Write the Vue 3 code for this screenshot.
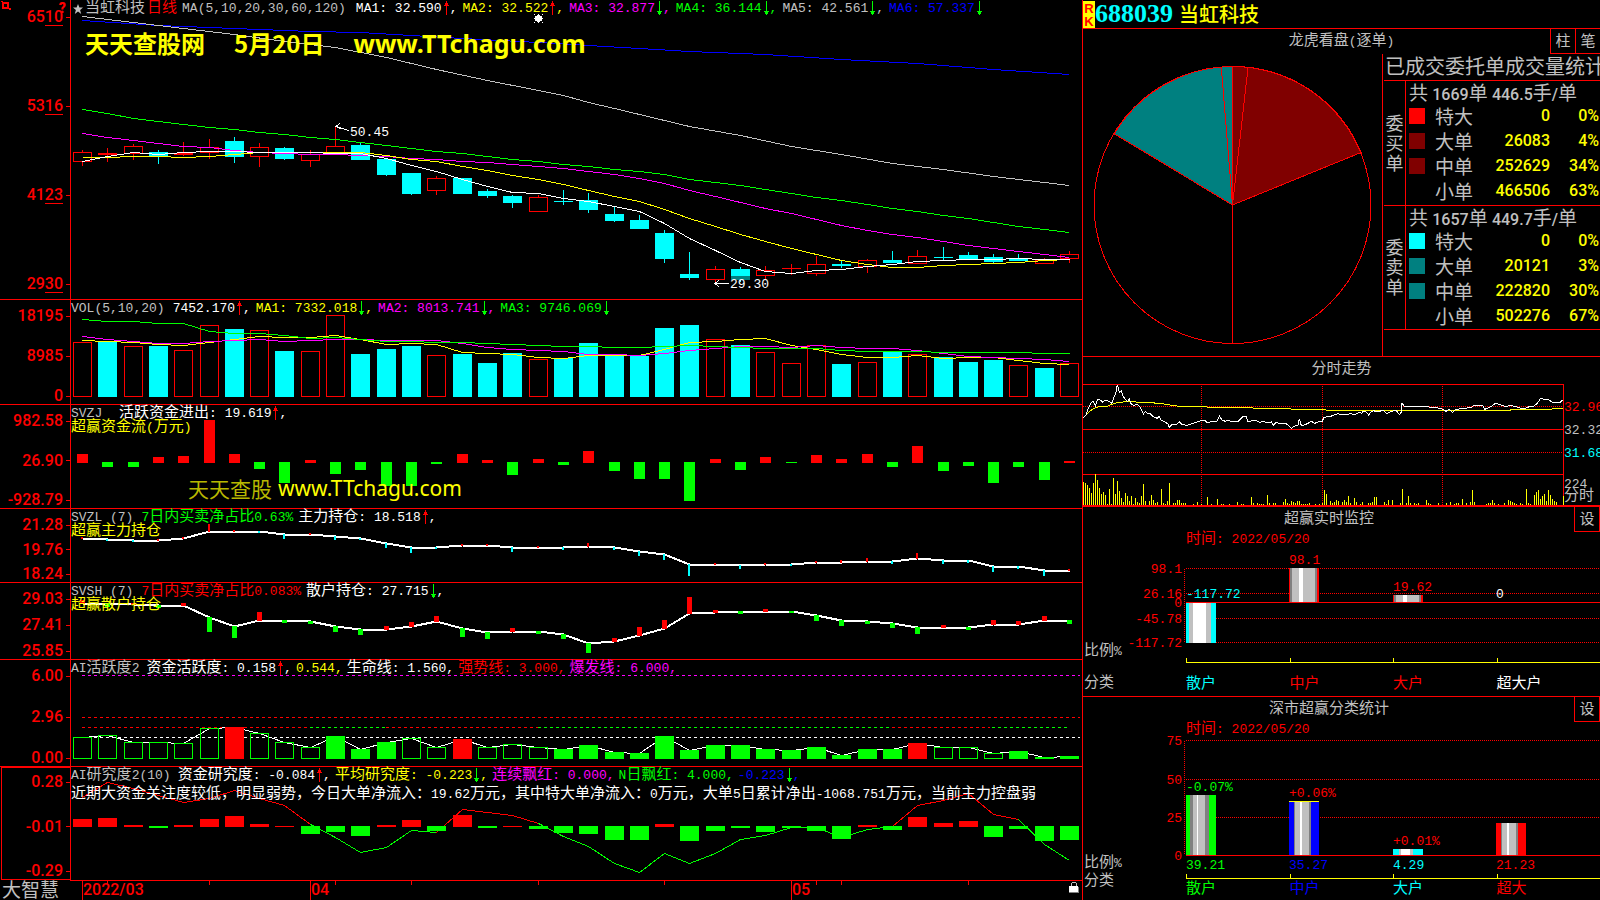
<script setup>
import { h } from 'vue'

const RED = '#ff0000'
const GREEN = '#00ff00'
const CYAN = '#00ffff'
const YELLOW = '#ffff00'
const MAGENTA = '#ff00ff'
const BLUE = '#0000ff'
const WHITE = '#ffffff'
const GRAY = '#c0c0c0'
const DIM = '#808080'

/* Latin runs use the narrow fixed-pitch face, Chinese runs the larger one. */
const Mix = (props) =>
  props.t
    .split(/([\u3000-\u9fff\uff00-\uffef]+)/)
    .filter(Boolean)
    .map((run) => (/[\u3000-\u9fff\uff00-\uffef]/.test(run) ? h('span', { class: 'zh' }, run) : run))
Mix.props = ['t']

const cx = (i) => Math.floor(82.5 + 25.31 * i)
const track = (ys, from = 0) => ys.map((y, i) => `${cx(i + from) + 0.5},${y + 0.5}`).join(' ')
const sparse = (pairs) => pairs.map(([i, y]) => `${cx(i) + 0.5},${y + 0.5}`).join(' ')
const solid = (x, y, w, hgt, color) => ({ x, y, w, h: hgt, fill: color, stroke: 'none' })
const hollow = (x, y, w, hgt, color) => ({ x: x + 0.5, y: y + 0.5, w: w - 1, h: hgt - 1, fill: 'none', stroke: color })
const line = (points, color, extra = {}) => ({ points, color, w: 1, dash: 'none', ...extra })

/* kind, body top, body bottom, high, low */
const candles = [
  ['r', 152, 162, 150, 166], ['r', 153, 155, 148, 162], ['r', 146, 154, 144, 160], ['c', 152, 156, 150, 164],
  ['r', 153, 155, 142, 156], ['r', 147, 153, 139, 159], ['c', 141, 157, 137, 163], ['r', 147, 157, 143, 167],
  ['c', 148, 159, 147, 160], ['r', 154, 161, 150, 167], ['r', 146, 155, 126, 155], ['c', 145, 160, 143, 160],
  ['c', 159, 175, 158, 176], ['c', 173, 194, 173, 195], ['r', 178, 191, 176, 195], ['c', 178, 194, 178, 194],
  ['c', 191, 196, 189, 198], ['c', 196, 203, 195, 208], ['r', 197, 212, 195, 212], ['c', 201, 202, 190, 205],
  ['c', 200, 210, 193, 213], ['c', 214, 221, 207, 222], ['c', 220, 229, 215, 229], ['c', 233, 259, 230, 263],
  ['c', 274, 278, 252, 280], ['r', 269, 280, 266, 283], ['c', 269, 276, 267, 282], ['r', 270, 276, 266, 279],
  ['r', 268, 269, 264, 275], ['r', 264, 274, 256, 276], ['c', 264, 266, 261, 268], ['r', 260, 267, 259, 273],
  ['c', 260, 263, 251, 263], ['r', 256, 264, 250, 264], ['c', 257, 258, 247, 260], ['c', 255, 259, 252, 259],
  ['c', 257, 262, 254, 264], ['c', 259, 261, 254, 261], ['r', 260, 264, 258, 264], ['r', 254, 259, 251, 263],
]
const candleRects = candles.flatMap(([k, top, bottom, high, low], i) => {
  const x = cx(i)
  const color = k === 'r' ? RED : CYAN
  if (k === 'c') return [solid(x, high, 1, low - high, color), solid(x - 9, top, 19, bottom - top, color)]
  return [
    solid(x, high, 1, Math.max(top - high, 0), color),
    solid(x, bottom, 1, Math.max(low - bottom, 0), color),
    bottom - top < 3 ? solid(x - 9, top, 19, bottom - top, color) : hollow(x - 9, top, 19, bottom - top, color),
  ]
})
candleRects.push(solid(cx(26) - 9, 276, 19, 4, '#008080'))

const volKinds = 'rcrcrrcrcrrcccrcccrccccccrcrrrcrcrcccrcr'
const volTops = [342, 341, 346, 346, 350, 325, 329, 330, 351, 351, 315, 354, 349, 346, 355, 354, 363, 353, 359, 358,
  343, 356, 356, 328, 325, 339, 345, 352, 363, 345, 364, 362, 351, 354, 357, 362, 360, 365, 368, 363]
const volRects = volTops.map((y, i) =>
  volKinds[i] === 'r' ? hollow(cx(i) - 9, y, 19, 397 - y, RED) : solid(cx(i) - 9, y, 19, 397 - y, CYAN))

const flow = [9, -5, -5, 6, 7, 43, 9, -7, -21, 3, -12, -8, -24, -24, -2, 9, 3, -13, 4, -3,
  12, -9, -17, -17, -39, 4, -8, 6, -1, 8, 4, 9, -5, 17, -9, -4, -21, -5, -18, 2]
const flowRects = flow.map((v, i) =>
  v > 0 ? solid(cx(i) - 5, 463 - v, 11, v, RED) : solid(cx(i) - 5, 462, 11, -v, GREEN))

const mainForce = [538, 539, 540, 540, 538, 531, 531, 531, 534, 534, 536, 538, 543, 547, 547, 545, 545, 547, 547, 547,
  546, 547, 551, 554, 564, 564, 565, 564, 564, 562, 562, 561, 561, 558, 560, 560, 566, 566, 570, 570]
const mainTicks = [1, -1, -1, 1, 1, 7, 1, -1, -4, 1, -3, -1, -4, -5, -1, 1, 1, -4, 1, -2,
  3, -2, -4, -5, -11, 1, -3, 1, -1, 1, 2, 3, -2, 5, -3, -2, -5, -2, -5, 1]
const retail = [603, 603, 604, 605, 605, 617, 626, 620, 620, 621, 626, 629, 629, 626, 621, 628, 632, 631, 631, 634,
  643, 641, 635, 628, 613, 612, 611, 611, 611, 615, 620, 621, 623, 627, 627, 627, 624, 624, 620, 620]
const retailTicks = [3, -3, 1, -2, 2, -14, -11, 8, -2, -2, -5, -5, 3, 4, 5, -8, -6, 3, -2, -4,
  -9, 3, 8, 8, 16, 2, -2, 2, -1, -5, -5, -2, -4, -6, 2, -2, 4, 3, 4, -3]
const tickRects = (base, ticks, w, down) =>
  ticks.map((v, i) => {
    const x = cx(i) - Math.floor(w / 2)
    return v > 0 ? solid(x, base[i] - v, w, v + 1, RED) : solid(x, base[i], w, 1 - v, down)
  })

const actKinds = 'ooooooRoooGGGooRoooGGGGGGGGGGGGGGRoooGGG'
const actTops = [737, 735, 742, 742, 743, 728, 727, 733, 742, 747, 736, 749, 742, 738, 747, 739, 747, 744, 747, 749,
  745, 752, 753, 736, 750, 745, 745, 749, 750, 747, 755, 749, 749, 743, 747, 747, 753, 751, 757, 756]
const actRects = actTops.map((y, i) => {
  const k = actKinds[i]
  return k === 'o' ? hollow(cx(i) - 9, y, 19, 759 - y, GREEN) : solid(cx(i) - 9, y, 19, 759 - y, k === 'R' ? RED : GREEN)
})
const level = (x1, x2, y, color) => line(`${x1},${y + 0.5} ${x2},${y + 0.5}`, color, { dash: '3 3' })

const study = [8, 9, 2, -2, 2, 8, 11, 3, 1, -8, -6, -10, 2, 7, -5, 12, -2, 1, -3, -7,
  -8, -14, -14, 3, -15, -5, -2, -6, -2, -5, -13, 2, -4, 10, 4, 6, -11, -3, -15, -14]
const studyRects = study.map((v, i) =>
  v > 0 ? solid(cx(i) - 9, 827 - v, 19, v, RED) : solid(cx(i) - 9, 826, 19, -v, GREEN))

const panels = [
  {
    id: 'price', box: [71, 0, 1011, 299], axis: ['6510', '5316', '4123', '2930'], ruled: true,
    title: 'MA(5,10,20,30,60,120)',
    items: [
      { t: 'MA1: 32.590', c: WHITE, a: 'up', end: ',' }, { t: 'MA2: 32.522', c: YELLOW, a: 'up', end: ',' },
      { t: 'MA3: 32.877', c: MAGENTA, a: 'down', end: ',' }, { t: 'MA4: 36.144', c: GREEN, a: 'down', end: ',' },
      { t: 'MA5: 42.561', c: GRAY, a: 'down', end: ',' }, { t: 'MA6: 57.337', c: BLUE, a: 'down', end: '' },
    ],
    under: [],
    rects: candleRects,
    lines: [
      line(sparse([[0, 20], [3, 25], [6, 28], [9, 31], [11, 32], [13, 35], [15, 38], [18, 42], [20, 45], [22, 48], [24, 51], [27, 54], [30, 59], [33, 63], [36, 69], [39, 74]]), BLUE),
      line(sparse([[0, 16], [2, 22], [4, 28], [6, 34], [8, 41], [10, 47], [12, 57], [14, 69], [16, 80], [18, 90], [19, 95], [20, 102], [21, 108], [22, 114], [24, 126], [26, 135], [28, 146], [30, 154], [32, 163], [34, 169], [36, 176], [38, 182], [39, 185]]), GRAY),
      line(track([109, 113, 118, 121, 124, 127, 129, 132, 134, 137, 139, 142, 145, 148, 151, 153, 156, 159, 161, 164, 166, 169, 171, 174, 179, 182, 185, 189, 193, 197, 200, 204, 208, 211, 215, 218, 222, 226, 229, 232]), GREEN),
      line(track([133, 137, 140, 143, 146, 147, 150, 152, 153, 154, 154, 155, 156, 158, 159, 161, 162, 164, 166, 168, 171, 174, 178, 183, 190, 196, 202, 208, 213, 219, 225, 230, 234, 237, 241, 245, 248, 251, 254, 257]), MAGENTA),
      line(track([157, 157, 156, 156, 157, 156, 154, 152, 152, 152, 152, 152, 155, 159, 161, 166, 170, 175, 179, 184, 190, 196, 201, 209, 218, 226, 234, 241, 248, 254, 260, 264, 267, 267, 265, 264, 263, 262, 260, 259]), YELLOW),
      line(track([161, 156, 152, 154, 152, 151, 151, 152, 152, 152, 153, 153, 158, 165, 171, 179, 186, 192, 193, 198, 201, 206, 211, 223, 238, 250, 262, 271, 273, 270, 269, 266, 264, 261, 260, 259, 259, 258, 259, 259]), WHITE),
      line('349,130.5 336,126.5', WHITE), line('340,123 336,126.5 341,129', WHITE),
      line('729,283.5 715,283.5', WHITE), line('719,280 715,283.5 719,287', WHITE),
    ],
  },
  {
    id: 'vol', box: [71, 300, 1011, 104], axis: ['18195', '8985', '0'],
    title: 'VOL(5,10,20)',
    items: [
      { t: '7452.170', c: WHITE, a: 'up', end: ',' }, { t: 'MA1: 7332.018', c: YELLOW, a: 'down', end: ',' },
      { t: 'MA2: 8013.741', c: MAGENTA, a: 'down', end: ',' }, { t: 'MA3: 9746.069', c: GREEN, a: 'down', end: '' },
    ],
    under: [],
    rects: volRects,
    lines: [
      line(track([340, 341, 342, 344, 345, 342, 339, 336, 337, 337, 335, 339, 344, 343, 344, 352, 353, 354, 357, 358, 355, 355, 355, 349, 342, 341, 339, 338, 345, 349, 354, 357, 357, 355, 358, 357, 357, 360, 363, 364]), YELLOW),
      line(track([336, 339, 341, 343, 343, 341, 340, 339, 341, 340, 339, 339, 340, 340, 340, 343, 347, 349, 350, 351, 354, 354, 355, 353, 350, 348, 346, 346, 347, 345, 347, 348, 348, 350, 353, 356, 357, 358, 359, 361]), MAGENTA),
      line(track([319, 321, 321, 323, 323, 331, 333, 333, 335, 338, 337, 339, 341, 341, 342, 342, 343, 344, 345, 346, 346, 347, 347, 346, 345, 346, 347, 348, 348, 348, 350, 351, 351, 351, 352, 352, 352, 352, 353, 353]), GREEN),
    ],
  },
  {
    id: 'svzj', box: [71, 405, 1011, 103], axis: ['982.58', '26.90', '-928.79'],
    title: 'SVZJ ',
    items: [{ t: '活跃资金进出: 19.619', c: WHITE, a: 'up', end: ',' }],
    sub: '超赢资金流(万元)', under: [], rects: flowRects, lines: [],
  },
  {
    id: 'svzl', box: [71, 509, 1011, 73], axis: ['21.28', '19.76', '18.24'],
    title: 'SVZL (7)',
    items: [{ t: '7日内买卖净占比0.63%', c: GREEN, end: '' }, { t: '主力持仓: 18.518', c: WHITE, a: 'up', end: ',' }],
    sub: '超赢主力持仓',
    under: [line(track(mainForce), WHITE, { w: 2 })],
    rects: tickRects(mainForce, mainTicks, 2, CYAN), lines: [],
  },
  {
    id: 'svsh', box: [71, 583, 1011, 76], axis: ['29.03', '27.41', '25.85'],
    title: 'SVSH (7)',
    items: [{ t: '7日内买卖净占比0.083%', c: RED, end: '' }, { t: '散户持仓: 27.715', c: WHITE, a: 'down', end: ',' }],
    sub: '超赢散户持仓',
    under: [line(track(retail), WHITE, { w: 2 })],
    rects: tickRects(retail, retailTicks, 5, GREEN), lines: [],
  },
  {
    id: 'active', box: [71, 660, 1011, 106], axis: ['6.00', '2.96', '0.00'],
    title: 'AI活跃度2',
    items: [
      { t: '资金活跃度: 0.158', c: WHITE, a: 'up', end: ',' }, { t: '0.544', c: YELLOW, end: ',' },
      { t: '生命线: 1.560', c: WHITE, end: ',' }, { t: '强势线: 3.000', c: RED, end: ',' },
      { t: '爆发线: 6.000', c: MAGENTA, end: ',' },
    ],
    under: [
      level(82, 1080, 675, MAGENTA), level(82, 1080, 717, RED), level(82, 310, 727, RED), level(310, 386, 727, GREEN),
      level(386, 538, 727, RED), level(538, 890, 727, GREEN), level(892, 990, 727, RED), level(992, 1069, 727, GREEN),
      level(82, 1080, 737, WHITE), line(track(actTops), WHITE),
    ],
    rects: actRects, lines: [],
  },
  {
    id: 'study', box: [71, 767, 1011, 113], axis: ['0.28', '-0.01', '-0.29'], boxed: true,
    title: 'AI研究度2(10)',
    items: [
      { t: '资金研究度: -0.084', c: WHITE, a: 'up', end: ',' }, { t: '平均研究度: -0.223', c: YELLOW, a: 'down', end: ',' },
      { t: '连续飘红: 0.000', c: MAGENTA, end: ',' }, { t: 'N日飘红: 4.000', c: GREEN, end: ',' },
      { t: '-0.223', c: BLUE, a: 'down', end: ',' },
    ],
    note: '近期大资金关注度较低，明显弱势，今日大单净流入：19.62万元，其中特大单净流入：0万元，大单5日累计净出-1068.751万元，当前主力控盘弱',
    under: [
      line(track([797, 782, 788, 795, 802, 798, 790, 798, 805, 824]), RED),
      line(track([824, 837, 852, 847, 830, 832], 9), GREEN),
      line(track([832, 809, 812, 815, 823], 14), RED),
      line(track([823, 836, 846, 863, 872, 853, 863, 853, 839, 835, 827, 827, 837, 829, 826], 18), GREEN),
      line(track([826, 805, 800, 793, 814, 819], 32), RED),
      line(track([819, 844, 860], 37), GREEN),
    ],
    rects: studyRects, lines: [],
  },
]

const months = [{ t: '2022/03', x: 82 }, { t: '04', x: 310 }, { t: '05', x: 791 }]
const weekMarks = [107, 209, 335, 411, 538, 664, 816, 841, 968]

const place = ([x0, y0, w, hgt], x, y) => ({
  left: `${((x - x0) / w) * 100}%`,
  top: `${((y - y0) / hgt) * 100}%`,
})

const orders = [
  {
    side: '委买单', sum: ['1669', '446.5'],
    rows: [['特大', '0', '0%', '#ff0000'], ['大单', '26083', '4%', '#800000'], ['中单', '252629', '34%', '#800000'], ['小单', '466506', '63%', '']],
  },
  {
    side: '委卖单', sum: ['1657', '449.7'],
    rows: [['特大', '0', '0%', '#00ffff'], ['大单', '20121', '3%', '#008080'], ['中单', '222820', '30%', '#008080'], ['小单', '502276', '67%', '']],
  },
]

/* Intraday series, three units to the pixel */
const priceLine = '10,202 18,195 25,175 33,158 39,153 46,168 52,150 58,148 68,156 78,150 90,156 96,160 101,142 107,132 112,104 118,128 124,122 130,140 142,155 148,147 152,160 160,166 172,163 180,170 190,192 196,184 202,190 210,191 220,200 232,205 238,199 243,210 252,214 258,218 265,222 268,233 276,223 292,222 298,215 305,223 320,226 340,220 362,212 374,211 382,219 396,214 410,216 418,198 426,210 436,214 444,211 458,216 474,214 488,200 498,198 504,216 520,211 530,213 540,217 552,214 562,219 574,216 581,226 588,216 600,222 612,221 620,222 634,235 644,228 654,225 658,206 664,227 675,224 684,220 694,214 704,220 716,215 726,215 732,202 742,200 752,199 762,195 774,191 784,194 798,194 812,191 826,194 838,186 846,190 850,183 860,187 866,195 872,187 880,182 894,186 904,182 912,183 920,191 930,186 942,182 950,183 958,194 964,186 966,160 974,170 986,171 1000,168 1015,168 1030,171 1044,169 1054,174 1070,173 1084,176 1098,184 1108,178 1118,187 1126,179 1142,176 1160,174 1175,173 1180,167 1208,166 1214,178 1226,173 1236,168 1246,160 1258,163 1268,167 1280,170 1290,166 1304,169 1320,174 1336,175 1350,169 1362,168 1372,160 1382,145 1396,149 1404,147 1416,156 1440,157 1448,150'
const avgLine = '10,202 20,194 30,183 44,174 56,170 82,169 98,162 115,157 145,155 190,157 240,160 290,168 380,170 382,172 515,172 520,175 630,175 634,178 735,178 740,181 1290,181 1295,178 1415,178 1420,175 1448,175'
const minuteVol = [[10, 396], [16, 399], [22, 405], [28, 414], [34, 429], [40, 399], [46, 373], [52, 390], [58, 414], [64, 432], [70, 426], [76, 435], [82, 462], [88, 417], [94, 462], [100, 384], [106, 432], [112, 393], [118, 423], [124, 444], [130, 456], [136, 429], [142, 438], [148, 452], [154, 438], [160, 462], [166, 444], [172, 456], [178, 460], [184, 438], [190, 402], [196, 453], [208, 453], [214, 435], [220, 450], [226, 459], [232, 456], [244, 417], [250, 459], [256, 462], [262, 453], [268, 399], [280, 459], [286, 458], [292, 450], [298, 450], [304, 459], [310, 459], [316, 459], [340, 462], [352, 456], [364, 462], [382, 441], [394, 462], [412, 447], [424, 462], [430, 462], [448, 462], [472, 456], [484, 462], [490, 462], [514, 441], [520, 459], [532, 459], [538, 462], [544, 462], [550, 462], [562, 435], [568, 459], [580, 459], [586, 459], [610, 456], [616, 447], [622, 459], [628, 462], [634, 453], [640, 456], [646, 459], [652, 453], [658, 453], [664, 462], [670, 462], [676, 462], [682, 462], [688, 459], [706, 462], [718, 462], [727, 460], [733, 420], [739, 432], [751, 453], [757, 459], [763, 456], [769, 450], [775, 453], [787, 456], [793, 450], [799, 456], [805, 438], [811, 459], [823, 444], [829, 456], [841, 462], [847, 456], [865, 459], [871, 459], [877, 456], [883, 441], [889, 441], [913, 456], [919, 462], [925, 450], [937, 450], [961, 459], [967, 417], [979, 459], [985, 438], [991, 459], [1003, 459], [1009, 462], [1015, 459], [1039, 450], [1045, 459], [1051, 462], [1075, 459], [1099, 459], [1111, 456], [1123, 462], [1129, 459], [1135, 459], [1147, 447], [1159, 459], [1171, 456], [1177, 420], [1183, 456], [1219, 462], [1225, 459], [1231, 459], [1237, 450], [1243, 459], [1255, 462], [1273, 459], [1285, 450], [1291, 453], [1297, 456], [1303, 459], [1309, 462], [1321, 459], [1327, 462], [1339, 417], [1345, 459], [1351, 462], [1363, 435], [1369, 426], [1375, 420], [1381, 447], [1387, 438], [1393, 432], [1399, 453], [1405, 420], [1411, 435], [1417, 447], [1423, 453], [1429, 456], [1450, 438]]
const dayBox = [1083, 384, 481, 121]
const dayLabels = [
  { t: '32.96', y: 408, c: RED }, { t: '32.32', y: 431, c: GRAY }, { t: '31.68', y: 454, c: CYAN },
  { t: '224', y: 485, c: GRAY }, { t: '分时', y: 497, c: GRAY },
]

/* x, top, bottom, then stripe colour / right edge pairs */
const stats = [
  {
    id: 'monitor', title: '超赢实时监控', box: [1183, 548, 417, 110],
    y: [['98.1', 568], ['26.16', 593], ['0', 602], ['-45.78', 618], ['-117.72', 642]], zero: 602, top: 568, bottom: 642,
    bars: [
      { x: 1186, top: 603, bottom: 643, s: [[CYAN, 3], [GRAY, 7], [WHITE, 20], [GRAY, 25], [CYAN, 30]] },
      { x: 1289, top: 568, bottom: 602, s: [[RED, 1], [DIM, 3], [GRAY, 10], [WHITE, 14], [GRAY, 26], [DIM, 28], [RED, 30]] },
      { x: 1393, top: 595, bottom: 602, s: [[RED, 1], [DIM, 3], [GRAY, 10], [WHITE, 14], [GRAY, 26], [DIM, 28], [RED, 30]] },
    ],
    values: [
      { t: '-117.72', x: 1186, y: 595, c: CYAN }, { t: '98.1', x: 1289, y: 561, c: RED },
      { t: '19.62', x: 1393, y: 588, c: RED }, { t: '0', x: 1496, y: 595, c: WHITE },
    ],
    cats: [['散户', CYAN], ['中户', RED], ['大户', RED], ['超大户', WHITE]],
  },
  {
    id: 'market', title: '深市超赢分类统计', box: [1183, 738, 417, 136],
    y: [['75', 740], ['50', 779], ['25', 817], ['0', 855]], zero: 855, top: 740, bottom: 855,
    bars: [
      { x: 1186, top: 795, bottom: 855, s: [[GREEN, 4], [DIM, 7], [GRAY, 11], [WHITE, 12], [GRAY, 19], [DIM, 23], [GREEN, 30]] },
      { x: 1289, top: 801, bottom: 855, cap: true, s: [[BLUE, 5], [DIM, 6], [GRAY, 11], [WHITE, 13], [GRAY, 20], [DIM, 22], [BLUE, 30]] },
      { x: 1393, top: 849, bottom: 855, s: [[CYAN, 6], [GRAY, 8], [WHITE, 17], [GRAY, 20], [CYAN, 30]] },
      { x: 1496, top: 823, bottom: 855, s: [[RED, 5], [DIM, 6], [GRAY, 11], [WHITE, 13], [GRAY, 20], [DIM, 22], [RED, 30]] },
    ],
    values: [
      { t: '-0.07%', x: 1186, y: 788, c: GREEN }, { t: '+0.06%', x: 1289, y: 794, c: RED }, { t: '+0.01%', x: 1393, y: 842, c: RED },
      { t: '39.21', x: 1186, y: 866, c: GREEN }, { t: '35.27', x: 1289, y: 866, c: BLUE },
      { t: '4.29', x: 1393, y: 866, c: CYAN }, { t: '21.23', x: 1496, y: 866, c: RED },
    ],
    cats: [['散户', GREEN], ['中户', BLUE], ['大户', CYAN], ['超大', RED]],
  },
]
const stripes = (bar) => bar.s.map(([c, to], i) => ({ c, x: bar.x + (i ? bar.s[i - 1][1] : 0), w: to - (i ? bar.s[i - 1][1] : 0) }))
</script>

<template>
  <main class="terminal">
    <section class="charts">
      <article v-for="p in panels" :key="p.id" class="panel" :class="p.id">
        <div class="axis" :class="{ boxed: p.boxed }">
          <template v-if="p.id === 'price'">
            <svg class="pin" viewBox="0 0 10 10"><rect x="2" y="3" width="5" height="5" /><path d="M9 8v2M1 1v1" /></svg>
            <b class="help">?</b>
          </template>
          <span v-for="a in p.axis" :key="a" class="mark">
            <template v-if="p.ruled">{{ a.slice(0, 2) }}<span class="ruled">{{ a.slice(2) }}</span></template>
            <template v-else>{{ a }}</template>
          </span>
        </div>
        <div class="plot">
          <svg class="draw" :viewBox="p.box.join(' ')" preserveAspectRatio="none">
            <polyline v-for="(l, i) in p.under" :key="'u' + i" :points="l.points" :stroke="l.color" :stroke-width="l.w" :stroke-dasharray="l.dash" fill="none" />
            <rect v-for="(r, i) in p.rects" :key="'r' + i" :x="r.x" :y="r.y" :width="r.w" :height="r.h" :fill="r.fill" :stroke="r.stroke" />
            <polyline v-for="(l, i) in p.lines" :key="'l' + i" :points="l.points" :stroke="l.color" :stroke-width="l.w" fill="none" />
          </svg>
          <header class="legend">
            <span v-if="p.id === 'price'" class="head">
              <svg class="star" viewBox="0 0 10 10"><path d="M5 0L6.4 3.6H10L7.1 5.9L8.2 10L5 7.6L1.8 10L2.9 5.9L0 3.6H3.6Z" /></svg>
              <span><Mix t="当虹科技" /></span><span class="period"><Mix t="日线" /></span>
            </span>
            <span class="name"><Mix :t="p.title" /></span>
            <span v-for="(it, i) in p.items" :key="i" class="item" :style="{ color: it.c }"><Mix :t="it.t" /><svg v-if="it.a" class="arrow" :class="it.a" viewBox="0 0 8 16"><path v-if="it.a === 'up'" d="M4 0h1v14h-1zM3 2h3v2h-3zM2 4h5v1h-5z" /><path v-else d="M4 0h1v14h-1zM3 10h3v3h-3zM2 10h5v1h-5z" /></svg>{{ it.end }}</span>
          </header>
          <p v-if="p.sub" class="sub"><Mix :t="p.sub" /></p>
          <p v-if="p.note" class="note"><Mix :t="p.note" /></p>
          <template v-if="p.id === 'price'">
            <p class="banner"><span>天天查股网</span><span>5月20日</span><span class="site">www.TTchagu.com</span></p>
            <span class="tag" :style="place(p.box, 350, 133)">50.45</span>
            <span class="tag" :style="place(p.box, 730, 285)">29.30</span>
            <svg class="spark" viewBox="0 0 9 9" :style="place(p.box, 534, 14)"><path d="M3 1h3v1h2v5h-2v1h-3v-1h-2v-5h2zM4 0h1v9h-1zM0 4h9v1h-9zM0 0h1v1h-1zM8 0h1v1h-1zM0 8h1v1h-1zM8 8h1v1h-1z" /></svg>
          </template>
          <p v-if="p.id === 'svzj'" class="stamp"><span class="faint">天天查股</span><span class="site">www.TTchagu.com</span></p>
        </div>
      </article>
      <footer class="timeline">
        <span class="brand">大智慧</span>
        <div class="dates">
          <svg class="draw" viewBox="70 880 1012 20" preserveAspectRatio="none">
            <rect x="70" y="880" width="1012" height="1" :fill="RED" />
            <rect v-for="m in months" :key="m.x" :x="m.x" y="880" width="1" height="20" :fill="RED" />
            <rect v-for="x in weekMarks" :key="x" :x="x" y="880" width="1" height="5" :fill="RED" />
          </svg>
          <time v-for="m in months" :key="m.t" class="month" :style="place([70, 880, 1012, 20], m.x + 1, 882)">{{ m.t }}</time>
          <svg class="lock" viewBox="0 0 10 12"><path d="M3 0h4v1h-4zM2 1h1v3h-1zM7 1h1v3h-1z" fill="#c0c0c0" /><path d="M0 4h9v6h-9z" fill="#fff" /><path d="M9 5h1v6h-10v-1h9z" fill="#808080" /></svg>
        </div>
      </footer>
    </section>

    <aside class="side">
      <header class="stock">
        <span class="rk"><b>R</b><b>K</b></span>
        <strong class="code">688039</strong>
        <h1 class="stock-name">当虹科技</h1>
      </header>

      <section class="book">
        <div class="bar">
          <h2><Mix t="龙虎看盘(逐单)" /></h2>
          <div class="keys"><button type="button">柱</button><button type="button">笔</button></div>
        </div>
        <div class="book-body">
          <svg class="pie" viewBox="1083 54 299 302">
            <path d="M1232.5 205L1114.3 133.8A138.5 138.5 0 0 1 1232.5 66.5Z" fill="#008080" />
            <path d="M1232.5 205V66.5A138.5 138.5 0 0 1 1361 152.5Z" fill="#800000" />
            <circle cx="1232.5" cy="205" r="138.5" />
            <path d="M1232.5 66V343M1232.5 205L1221.3 67.5M1232.5 205L1114.3 133.8M1232.5 205L1248 68M1232.5 205L1361 152.5" />
          </svg>
          <div class="orders">
            <h3>已成交委托单成交量统计</h3>
            <table>
              <colgroup><col class="c-side" /><col class="c-chip" /><col class="c-size" /><col class="c-qty" /><col /></colgroup>
              <tbody v-for="o in orders" :key="o.side">
                <tr>
                  <th rowspan="5" scope="rowgroup" class="side-name"><span v-for="ch in o.side" :key="ch">{{ ch }}</span></th>
                  <td colspan="4" class="sum">共 <span class="num">{{ o.sum[0] }}</span>单 <span class="num">{{ o.sum[1] }}</span>手<span class="num">/</span>单</td>
                </tr>
                <tr v-for="r in o.rows" :key="r[0]">
                  <td class="chip"><svg v-if="r[3]" viewBox="0 0 16 16"><rect width="16" height="16" :fill="r[3]" /></svg></td>
                  <th scope="row" class="size">{{ r[0] }}</th>
                  <td class="qty">{{ r[1] }}</td>
                  <td class="pct">{{ r[2] }}</td>
                </tr>
              </tbody>
            </table>
          </div>
        </div>
      </section>

      <section class="intraday">
        <h2><Mix t="分时走势" /></h2>
        <div class="day">
          <svg class="draw thin" viewBox="9 102 1443 363" preserveAspectRatio="none">
            <g :stroke="RED" fill="none">
              <path d="M9 103.5H1452M9 238.5H1452M9 373.5H1452M1450.5 102V465" />
              <path stroke-dasharray="1 1" d="M9 169.5H1450M9 307.5H1450M364.5 103V465M727.5 103V465M1087.5 103V465" />
            </g>
            <rect v-for="[x, y] in minuteVol" :key="x" :x="x - 1" :y="y" width="3" :height="465 - y" :fill="YELLOW" />
            <polyline :points="avgLine" :stroke="YELLOW" fill="none" />
            <polyline :points="priceLine" :stroke="WHITE" fill="none" />
          </svg>
          <div class="day-scale">
            <span v-for="l in dayLabels" :key="l.t" class="tag" :style="{ top: place(dayBox, 0, l.y).top, color: l.c }"><Mix :t="l.t" /></span>
          </div>
        </div>
      </section>

      <section v-for="s in stats" :key="s.id" class="stat" :class="s.id">
        <div class="bar">
          <h2><Mix :t="s.title" /></h2>
          <div class="keys"><button type="button">设</button></div>
        </div>
        <div class="stat-body">
          <div class="row-names"><span><Mix t="比例%" /></span><span><Mix t="分类" /></span></div>
          <div class="graph">
            <p class="when"><Mix t="时间: 2022/05/20" /></p>
            <div class="field">
              <svg class="draw" :viewBox="s.box.join(' ')" preserveAspectRatio="none">
                <g :stroke="RED" fill="none">
                  <template v-for="[t, y] in s.y" :key="t">
                    <line v-if="y !== s.zero" x1="1186" x2="1600" :y1="y + 0.5" :y2="y + 0.5" stroke-dasharray="1 1" />
                  </template>
                  <line x1="1186" x2="1600" :y1="s.zero + 0.5" :y2="s.zero + 0.5" />
                  <line x1="1184.5" x2="1184.5" :y1="s.top + 1" :y2="s.bottom" stroke-dasharray="1 1" />
                </g>
                <g v-for="b in s.bars" :key="b.x">
                  <rect v-for="q in stripes(b)" :key="q.x" :x="q.x" :y="b.top" :width="q.w" :height="b.bottom - b.top" :fill="q.c" />
                  <rect v-if="b.cap" :x="b.x" :y="b.top" width="30" height="1" :fill="YELLOW" />
                </g>
              </svg>
              <span v-for="[t, y] in s.y" :key="t" class="scale" :style="{ top: place(s.box, 0, y + 2).top }">{{ t }}</span>
              <span v-for="v in s.values" :key="v.t" class="tag" :style="{ ...place(s.box, v.x, v.y), color: v.c }">{{ v.t }}</span>
            </div>
            <div class="cats">
              <span v-for="c in s.cats" :key="c[0]" class="cat" :style="{ color: c[1] }"><Mix :t="c[0]" /></span>
            </div>
          </div>
        </div>
      </section>
    </aside>
  </main>
</template>

<style>
html,
body {
  background: #000;
}

.zh {
  font-family: "Noto Sans CJK SC", sans-serif;
  font-size: 15px;
  line-height: 0;
}
</style>

<style scoped>
.terminal {
  display: grid;
  grid-template-columns: minmax(0, 1082fr) minmax(0, 518fr);
  height: 100vh;
  min-height: 800px;
  overflow: hidden;
  background: #000;
  color: #c0c0c0;
  font-family: "Liberation Mono", "Noto Sans CJK SC", monospace;
  font-size: 13px;
  line-height: 16px;
}

p, h1, h2, h3 {
  margin: 0;
  font-weight: 400;
}

.charts {
  display: grid;
  grid-template-rows: 299fr 105fr 104fr 74fr 77fr 107fr 114fr 20fr;
}

.panel {
  display: grid;
  grid-template-columns: 70px minmax(0, 1fr);
  min-height: 0;
  border-top: 1px solid #f00;
}

.panel.price {
  border-top: 0;
}

.axis {
  position: relative;
  display: flex;
  flex-direction: column;
  justify-content: space-between;
  align-items: flex-end;
  padding: 8px 0 0;
  color: #f00;
  font-family: Roboto, sans-serif;
  font-size: 16px;
  font-weight: 500;
}

.price .axis { padding: 9px 0 7px; }
.study .axis { padding-top: 6px; }

.axis.boxed {
  border: 1px solid #f00;
  border-right: 0;
  margin-left: 1px;
}

.mark {
  display: flex;
  align-items: center;
}

.mark::after {
  content: "";
  width: 4px;
  height: 1px;
  margin-left: 3px;
  background: #f00;
}

.ruled {
  box-shadow: 0 1px 0 #f00;
}

.pin {
  position: absolute;
  top: 0;
  left: 1px;
  width: 10px;
  height: 10px;
  fill: none;
  stroke: #f00;
  stroke-width: 2;
}

.help {
  position: absolute;
  top: 0;
  right: 4px;
  font-size: 14px;
  font-weight: 900;
}

.plot {
  position: relative;
  min-width: 0;
  border-left: 1px solid #f00;
}

.draw {
  position: absolute;
  inset: 0;
  width: 100%;
  height: 100%;
  shape-rendering: crispEdges;
}

.thin * {
  vector-effect: non-scaling-stroke;
}

.legend {
  position: relative;
  display: flex;
  gap: 5px;
  padding-top: 1px;
  white-space: pre;
}

.head {
  display: flex;
  gap: 2px;
  padding-left: 2px;
}

.name {
  margin-right: 3px;
}

.price .name {
  margin-right: 5px;
}

.svzj .name {
  margin-right: 4px;
}

.active .legend,
.study .legend {
  gap: 4px;
}

.star {
  align-self: center;
  width: 10px;
  height: 10px;
  fill: #c0c0c0;
}

.period {
  color: #f00;
}

.arrow {
  display: inline-block;
  width: 8px;
  height: 16px;
  vertical-align: top;
  shape-rendering: crispEdges;
}

.up {
  fill: #f00;
}

.down {
  fill: #0f0;
}

.sub,
.note {
  position: relative;
  color: #ff0;
  white-space: nowrap;
}

.sub {
  margin-top: -2px;
}

.note {
  margin-top: 3px;
  color: #fff;
}

.banner,
.stamp {
  position: absolute;
  display: flex;
  color: #ff0;
  white-space: nowrap;
}

.banner {
  top: 27px;
  left: 14px;
  gap: 29px;
  font-family: "Noto Sans CJK SC", sans-serif;
  font-size: 24px;
  font-weight: 700;
  line-height: 32px;
}

.site {
  font-family: "Noto Sans", sans-serif;
}

.banner .site {
  font-size: 25px;
}

.stamp {
  top: 69px;
  left: 117px;
  gap: 6px;
  font-family: "Noto Sans CJK SC", sans-serif;
  font-size: 21px;
  line-height: 28px;
}

.faint {
  color: #b8b800;
}

.tag {
  position: absolute;
  margin-top: -8px;
  color: #fff;
  white-space: nowrap;
}

.spark {
  position: absolute;
  width: 9px;
  height: 9px;
  fill: #fff;
}

.timeline {
  display: grid;
  grid-template-columns: 70px minmax(0, 1fr);
}

.brand {
  padding-left: 2px;
  font-family: "Noto Sans CJK SC", sans-serif;
  font-size: 19px;
  line-height: 18px;
}

.dates {
  position: relative;
}

.month {
  position: absolute;
  color: #f00;
  font-family: Roboto, sans-serif;
  font-size: 16px;
  font-weight: 500;
}

.lock {
  position: absolute;
  top: 2px;
  right: 3px;
  width: 10px;
  height: 12px;
}

.side {
  display: grid;
  grid-template-rows: 28fr 328fr 150fr 190fr 204fr;
  min-width: 0;
  border-left: 1px solid #f00;
}

.side > * {
  min-height: 0;
}

.stock {
  display: flex;
  align-items: center;
}

.rk {
  display: flex;
  flex-direction: column;
  align-self: stretch;
  justify-content: center;
  width: 12px;
  margin-top: 1px;
  background: #ff0;
  color: #f00;
  font-family: "Liberation Sans", sans-serif;
  font-size: 13px;
  line-height: 13px;
  text-align: center;
}

.code {
  color: #0ff;
  font-family: "Liberation Serif", serif;
  font-size: 26px;
  line-height: 28px;
}

.stock-name {
  margin-left: 6px;
  color: #ff0;
  font-family: "Noto Sans CJK SC", sans-serif;
  font-size: 20px;
  font-weight: 500;
  line-height: 28px;
}

.book,
.intraday,
.stat {
  display: flex;
  flex-direction: column;
  border-top: 1px solid #f00;
}

.intraday {
  border-bottom: 1px solid #f00;
}

.bar {
  position: relative;
  display: flex;
  flex: none;
  height: 25px;
  align-items: center;
  justify-content: center;
}

.stat .bar {
  padding-right: 25px;
}

.keys {
  position: absolute;
  inset: 0 0 0 auto;
  display: flex;
}

.keys button {
  width: 25px;
  padding: 0 0 2px;
  border: solid #f00;
  border-width: 0 0 1px 1px;
  background: #000;
  color: #c0c0c0;
  font-family: "Noto Sans CJK SC", sans-serif;
  font-size: 15px;
  line-height: 16px;
}

.stat .keys button {
  width: 26px;
  border-right-width: 1px;
}

h2 {
  font-size: 13px;
}

.book-body {
  display: flex;
  flex: 1;
  min-height: 0;
}

.pie {
  flex: 1;
  min-width: 0;
  height: 100%;
  fill: none;
  stroke: #f00;
  shape-rendering: crispEdges;
}

.orders {
  width: 218px;
  box-sizing: border-box;
  padding-left: 1px;
  overflow: hidden;
  border-left: 1px solid #f00;
  font-family: "Noto Sans CJK SC", sans-serif;
  font-size: 19px;
}

h3 {
  height: 26px;
  padding-left: 1px;
  font-size: 20px;
  line-height: 24px;
  white-space: nowrap;
}

table {
  width: 100%;
  border-collapse: separate;
  border-spacing: 0;
  table-layout: fixed;
}

.c-side { width: 22px; }
.c-chip { width: 24px; }
.c-size { width: 46px; }
.c-qty { width: 74px; }

tbody tr:first-child > * {
  border-top: 1px solid #f00;
}

tbody:last-child .side-name,
tbody:last-child tr:last-child > * {
  border-bottom: 1px solid #f00;
}

td, th {
  box-sizing: border-box;
  height: 25px;
  padding: 0 0 3px;
  font-weight: 400;
  line-height: 20px;
  text-align: left;
  white-space: nowrap;
}

.side-name {
  border-right: 1px solid #f00;
  font-size: 18px;
  text-align: center;
}

.side-name span {
  display: block;
}

.sum {
  padding-left: 3px;
}

.num,
.qty,
.pct {
  font-family: Roboto, sans-serif;
  font-size: 16px;
  font-weight: 500;
}

.num {
  line-height: 0;
}

.chip {
  padding-left: 3px;
}

.chip svg {
  display: block;
  width: 16px;
  height: 16px;
}

.size {
  padding-left: 5px;
}

.qty,
.pct {
  color: #ff0;
  text-align: right;
}

.pct {
  padding-right: 1px;
}

.intraday h2 {
  height: 27px;
  line-height: 25px;
  text-align: center;
}

.day {
  display: grid;
  flex: 1;
  grid-template-columns: minmax(0, 1fr) 36px;
  min-height: 0;
  position: relative;
}

.day .draw {
  position: static;
  min-height: 0;
}

.day-scale {
  position: relative;
  overflow: hidden;
}

.stat-body {
  display: grid;
  flex: 1;
  grid-template-columns: 100px minmax(0, 1fr);
  min-height: 0;
}

.row-names {
  display: flex;
  flex-direction: column;
  justify-content: flex-end;
  gap: 16px;
  padding: 0 0 4px 1px;
}

.market .row-names {
  gap: 2px;
  padding-bottom: 10px;
}

.graph {
  display: flex;
  flex-direction: column;
  min-width: 0;
}

.when {
  padding-left: 3px;
  color: #f00;
}

.field {
  position: relative;
  flex: 1;
}

.scale {
  position: absolute;
  right: 100%;
  margin: -8px 1px 0 0;
  color: #f00;
}

.cats {
  display: grid;
  grid-template-columns: repeat(4, minmax(0, 1fr));
  padding-left: 3px;
}

.cat {
  background:
    linear-gradient(#ff0, #ff0) 0 0 / 1px 5px no-repeat,
    linear-gradient(#ff0, #ff0) 0 4px / 100% 1px no-repeat;
}

.monitor .cat {
  padding: 19px 0 3px;
}

.market .cat {
  padding: 8px 0 2px;
}
</style>
